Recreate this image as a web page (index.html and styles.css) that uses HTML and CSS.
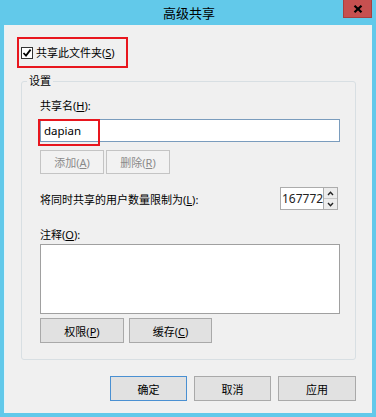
FILE: index.html
```html
<!DOCTYPE html>
<html lang="zh-CN">
<head>
    <meta charset="UTF-8">
    <meta name="viewport" content="width=device-width, initial-scale=1.0">
    <title>高级共享</title>
    <link rel="stylesheet" href="styles.css">
</head>
<body>
    <div class="window">
        <div class="titlebar">
            <span class="title">高级共享</span>
            <button class="close" aria-label="关闭">
                <svg width="10" height="8" viewBox="0 0 10 8"><path d="M1.5 0.8 L8.5 7.2 M8.5 0.8 L1.5 7.2" stroke="#000" stroke-width="2.2"/></svg>
            </button>
        </div>

        <div class="client">
            <div class="mark share-box">
                <span class="checkbox">
                    <svg width="10" height="10" viewBox="0 0 10 10"><path d="M1.5 5 L4 7.6 L8.6 1.6" fill="none" stroke="#000" stroke-width="1.8"/></svg>
                </span>
                <span>共享此文件夹(<u>S</u>)</span>
            </div>

            <fieldset class="group">
                <legend>设置</legend>

                <div class="field-label">共享名(<u>H</u>):</div>
                <div class="name-wrap">
                    <div class="text-input">dapian</div>
                    <div class="mark name-mark"></div>
                </div>

                <div class="btn-row">
                    <button class="btn small" disabled>添加(<u>A</u>)</button>
                    <button class="btn small" disabled>删除(<u>R</u>)</button>
                </div>

                <div class="limit-row">
                    <span>将同时共享的用户数量限制为(<u>L</u>):</span>
                    <div class="spinner">
                        <div class="spin-value">167772</div>
                        <div class="spin-buttons">
                            <span class="spin-btn"><svg width="7" height="5" viewBox="0 0 7 5"><path d="M1 4 L3.5 1.3 L6 4" fill="none" stroke="#222" stroke-width="1.4"/></svg></span>
                            <span class="spin-btn"><svg width="7" height="5" viewBox="0 0 7 5"><path d="M1 1 L3.5 3.7 L6 1" fill="none" stroke="#222" stroke-width="1.4"/></svg></span>
                        </div>
                    </div>
                </div>

                <div class="field-label comment-label">注释(<u>O</u>):</div>
                <div class="textarea"></div>

                <div class="btn-row tight">
                    <button class="btn perm">权限(<u>P</u>)</button>
                    <button class="btn cache">缓存(<u>C</u>)</button>
                </div>
            </fieldset>

            <div class="footer">
                <button class="btn dlg default">确定</button>
                <button class="btn dlg">取消</button>
                <button class="btn dlg wide">应用</button>
            </div>
        </div>
    </div>
</body>
</html>
```

FILE: styles.css
```css
body {
    margin: 0;
    background: #62c9ea;
    font-family: "Noto Sans", "Noto Sans CJK SC", sans-serif;
    font-size: 11px;
    color: #000;
}
.window {
    width: 376px;
    height: 417px;
    display: flex;
    flex-direction: column;
}
.titlebar {
    position: relative;
    height: 25px;
    display: flex;
    align-items: center;
    justify-content: center;
}
.title {
    font-size: 13px;
    line-height: 16px;
    padding-left: 2px;
}
.close {
    position: absolute;
    top: 0;
    right: 4px;
    width: 29px;
    height: 18px;
    padding: 0;
    background: #c75050;
    border: 1px solid #a83f3f;
    border-top: none;
    display: flex;
    align-items: center;
    justify-content: center;
}
.client {
    flex: 1;
    margin: 0 4px 4px 4px;
    background: #f0f0f0;
    border-left: 1px solid #e4f3f9;
    padding: 12px 16px 0 12px;
}
.mark {
    border: 2px solid #e8161e;
}
.share-box {
    width: 105px;
    height: 27px;
    display: flex;
    align-items: center;
    gap: 3px;
    padding-left: 2px;
    line-height: 16px;
}
.checkbox {
    width: 10px;
    height: 10px;
    border: 1px solid #333;
    background: #fff;
    display: flex;
    align-items: center;
    justify-content: center;
}
.group {
    margin: 5px 0 0 4px;
    padding: 9px 15px 16px 18px;
    border: 1px solid #d8dfe3;
    border-radius: 3px;
}
.group legend {
    padding: 0 2px;
    margin-left: -13px;
    line-height: 16px;
}
.field-label {
    line-height: 16px;
    margin-bottom: 5px;
}
.name-wrap {
    position: relative;
}
.text-input {
    box-sizing: border-box;
    width: 300px;
    height: 23px;
    border: 1px solid #7a9cbd;
    background: #fff;
    font-size: 11.5px;
    line-height: 21px;
    padding-left: 3px;
}
.name-mark {
    position: absolute;
    left: -2px;
    top: 0;
    width: 58px;
    height: 23px;
}
.btn-row {
    display: flex;
    gap: 2px;
    margin-top: 8px;
}
.btn {
    font-family: inherit;
    font-size: 11px;
    color: #000;
    background: #e1e1e1;
    border: 1px solid #a9a9a9;
    padding: 0;
    box-sizing: border-box;
}
.btn.small {
    width: 64px;
    height: 24px;
}
.btn:disabled {
    background: #f2f2f2;
    border-color: #c4c4c4;
    color: #8a8a8a;
}
.limit-row {
    margin-top: 13px;
    height: 23px;
    display: flex;
    align-items: center;
    justify-content: space-between;
    padding-right: 2px;
}
.spinner {
    display: flex;
    height: 23px;
}
.spin-value {
    box-sizing: border-box;
    width: 43px;
    border: 1px solid #acacac;
    border-right: none;
    background: #fff;
    font-size: 12px;
    line-height: 21px;
    padding-left: 1px;
    color: #222;
    overflow: hidden;
}
.spin-buttons {
    width: 15px;
    display: flex;
    flex-direction: column;
    border: 1px solid #acacac;
    box-sizing: border-box;
}
.spin-btn {
    flex: 1;
    display: flex;
    align-items: center;
    justify-content: center;
    background: #ececec;
}
.spin-btn + .spin-btn {
    border-top: 1px solid #c9c9c9;
}
.comment-label {
    margin-top: 17px;
    margin-bottom: 1px;
}
.textarea {
    box-sizing: border-box;
    width: 300px;
    height: 70px;
    border: 1px solid #a0a0a0;
    background: #fff;
}
.btn-row.tight {
    margin-top: 4px;
    gap: 5px;
}
.btn.perm {
    width: 84px;
    height: 25px;
}
.btn.cache {
    width: 83px;
    height: 25px;
}
.footer {
    margin-top: 16px;
    display: flex;
    justify-content: flex-end;
    gap: 7px;
    margin-right: 0;
}
.btn.dlg {
    width: 77px;
    height: 25px;
}
.btn.wide {
    width: 78px;
}
.btn.default {
    border-color: #4a90d2;
}
```
